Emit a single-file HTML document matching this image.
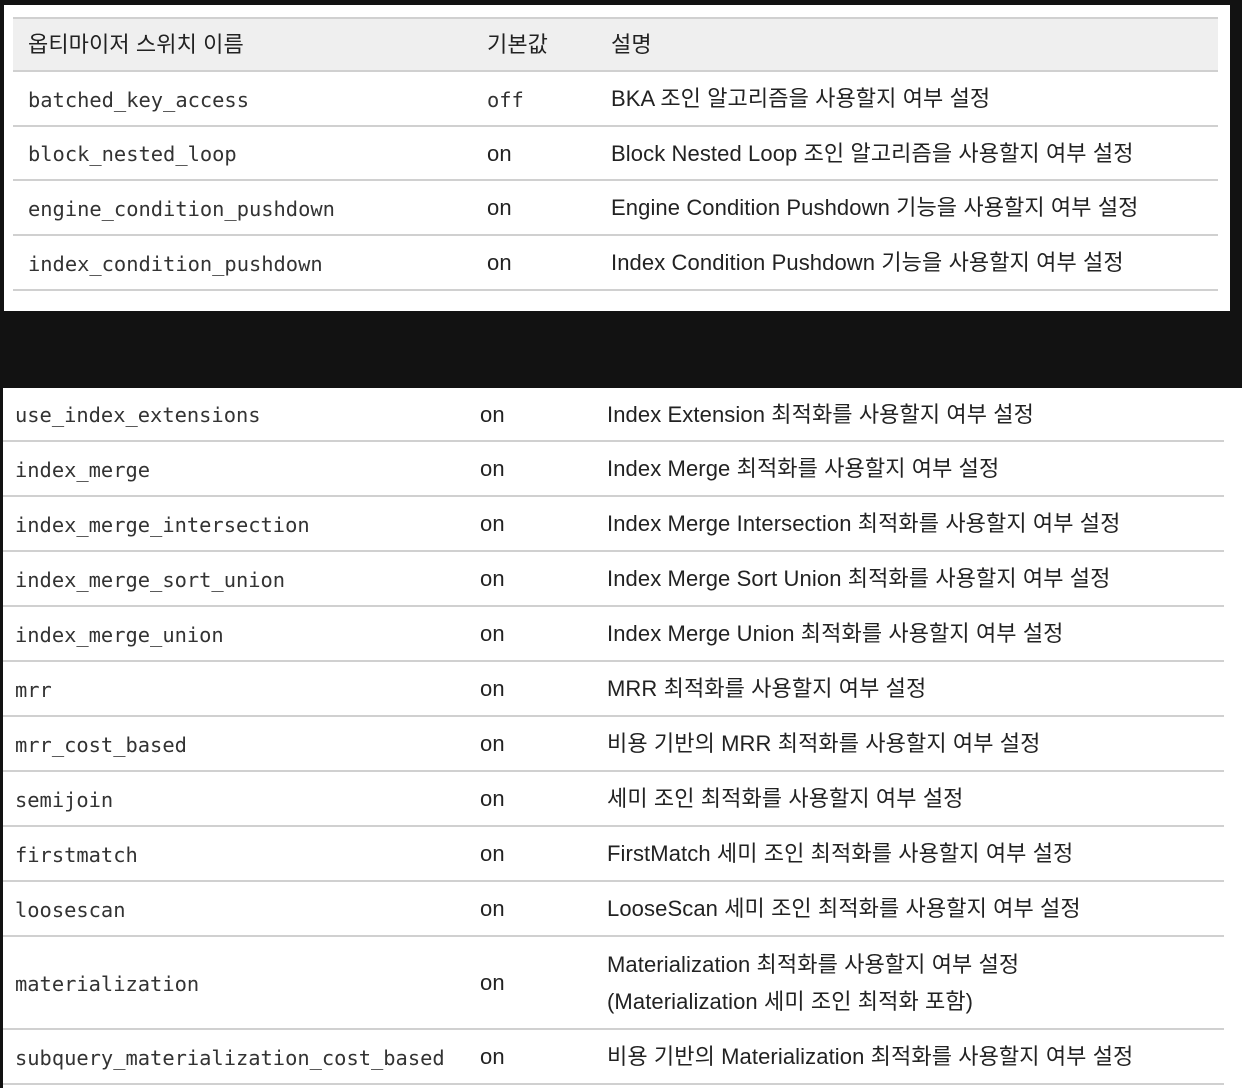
<!DOCTYPE html>
<html><head><meta charset="utf-8"><style>
body{margin:0;width:1242px;height:1088px;background:#121212;position:relative;overflow:hidden;font-family:"Liberation Sans","Noto Sans CJK KR",sans-serif;color:#222}
.p{position:absolute;background:#fff}
.r{position:absolute;left:0;right:0;border-bottom:2px solid #d0d0d0;box-sizing:border-box}
.c{position:absolute;top:0;bottom:0;display:flex;align-items:center;font-size:22px;line-height:37px;letter-spacing:0.1px}
.m{font-family:"DejaVu Sans Mono","Liberation Mono",monospace;font-size:20.4px;letter-spacing:0;padding-top:3px;color:#333}
</style></head><body>
<div class="p" style="left:4px;top:5px;width:1226px;height:306px">
 <div style="position:absolute;left:9px;width:1205px;top:12px;height:274px">
  <div class="r" style="top:0;height:55px;background:#efefef;border-top:2px solid #d0d0d0"><div class="c" style="left:15px">옵티마이저 스위치 이름</div><div class="c" style="left:474px">기본값</div><div class="c" style="left:598px">설명</div></div>
  <div class="r" style="top:55px;height:55px"><div class="c m" style="left:15px">batched_key_access</div><div class="c m" style="left:474px">off</div><div class="c" style="left:598px">BKA 조인 알고리즘을 사용할지 여부 설정</div></div>
  <div class="r" style="top:110px;height:54px"><div class="c m" style="left:15px">block_nested_loop</div><div class="c" style="left:474px">on</div><div class="c" style="left:598px">Block Nested Loop 조인 알고리즘을 사용할지 여부 설정</div></div>
  <div class="r" style="top:164px;height:55px"><div class="c m" style="left:15px">engine_condition_pushdown</div><div class="c" style="left:474px">on</div><div class="c" style="left:598px">Engine Condition Pushdown 기능을 사용할지 여부 설정</div></div>
  <div class="r" style="top:219px;height:55px"><div class="c m" style="left:15px">index_condition_pushdown</div><div class="c" style="left:474px">on</div><div class="c" style="left:598px">Index Condition Pushdown 기능을 사용할지 여부 설정</div></div>
 </div>
</div>
<div class="p" style="left:3px;top:388px;width:1239px;height:700px">
 <div style="position:absolute;left:0;width:1221px;top:0;height:700px">
  <div class="r" style="top:0;height:54px"><div class="c m" style="left:12px">use_index_extensions</div><div class="c" style="left:477px">on</div><div class="c" style="left:604px">Index Extension 최적화를 사용할지 여부 설정</div></div>
  <div class="r" style="top:54px;height:55px"><div class="c m" style="left:12px">index_merge</div><div class="c" style="left:477px">on</div><div class="c" style="left:604px">Index Merge 최적화를 사용할지 여부 설정</div></div>
  <div class="r" style="top:109px;height:55px"><div class="c m" style="left:12px">index_merge_intersection</div><div class="c" style="left:477px">on</div><div class="c" style="left:604px">Index Merge Intersection 최적화를 사용할지 여부 설정</div></div>
  <div class="r" style="top:164px;height:55px"><div class="c m" style="left:12px">index_merge_sort_union</div><div class="c" style="left:477px">on</div><div class="c" style="left:604px">Index Merge Sort Union 최적화를 사용할지 여부 설정</div></div>
  <div class="r" style="top:219px;height:55px"><div class="c m" style="left:12px">index_merge_union</div><div class="c" style="left:477px">on</div><div class="c" style="left:604px">Index Merge Union 최적화를 사용할지 여부 설정</div></div>
  <div class="r" style="top:274px;height:55px"><div class="c m" style="left:12px">mrr</div><div class="c" style="left:477px">on</div><div class="c" style="left:604px">MRR 최적화를 사용할지 여부 설정</div></div>
  <div class="r" style="top:329px;height:55px"><div class="c m" style="left:12px">mrr_cost_based</div><div class="c" style="left:477px">on</div><div class="c" style="left:604px">비용 기반의 MRR 최적화를 사용할지 여부 설정</div></div>
  <div class="r" style="top:384px;height:55px"><div class="c m" style="left:12px">semijoin</div><div class="c" style="left:477px">on</div><div class="c" style="left:604px">세미 조인 최적화를 사용할지 여부 설정</div></div>
  <div class="r" style="top:439px;height:55px"><div class="c m" style="left:12px">firstmatch</div><div class="c" style="left:477px">on</div><div class="c" style="left:604px">FirstMatch 세미 조인 최적화를 사용할지 여부 설정</div></div>
  <div class="r" style="top:494px;height:55px"><div class="c m" style="left:12px">loosescan</div><div class="c" style="left:477px">on</div><div class="c" style="left:604px">LooseScan 세미 조인 최적화를 사용할지 여부 설정</div></div>
  <div class="r" style="top:549px;height:93px"><div class="c m" style="left:12px">materialization</div><div class="c" style="left:477px">on</div><div class="c" style="left:604px">Materialization 최적화를 사용할지 여부 설정<br>(Materialization 세미 조인 최적화 포함)</div></div>
  <div class="r" style="top:642px;height:55px"><div class="c m" style="left:12px">subquery_materialization_cost_based</div><div class="c" style="left:477px">on</div><div class="c" style="left:604px">비용 기반의 Materialization 최적화를 사용할지 여부 설정</div></div>
 </div>
</div>
</body></html>
